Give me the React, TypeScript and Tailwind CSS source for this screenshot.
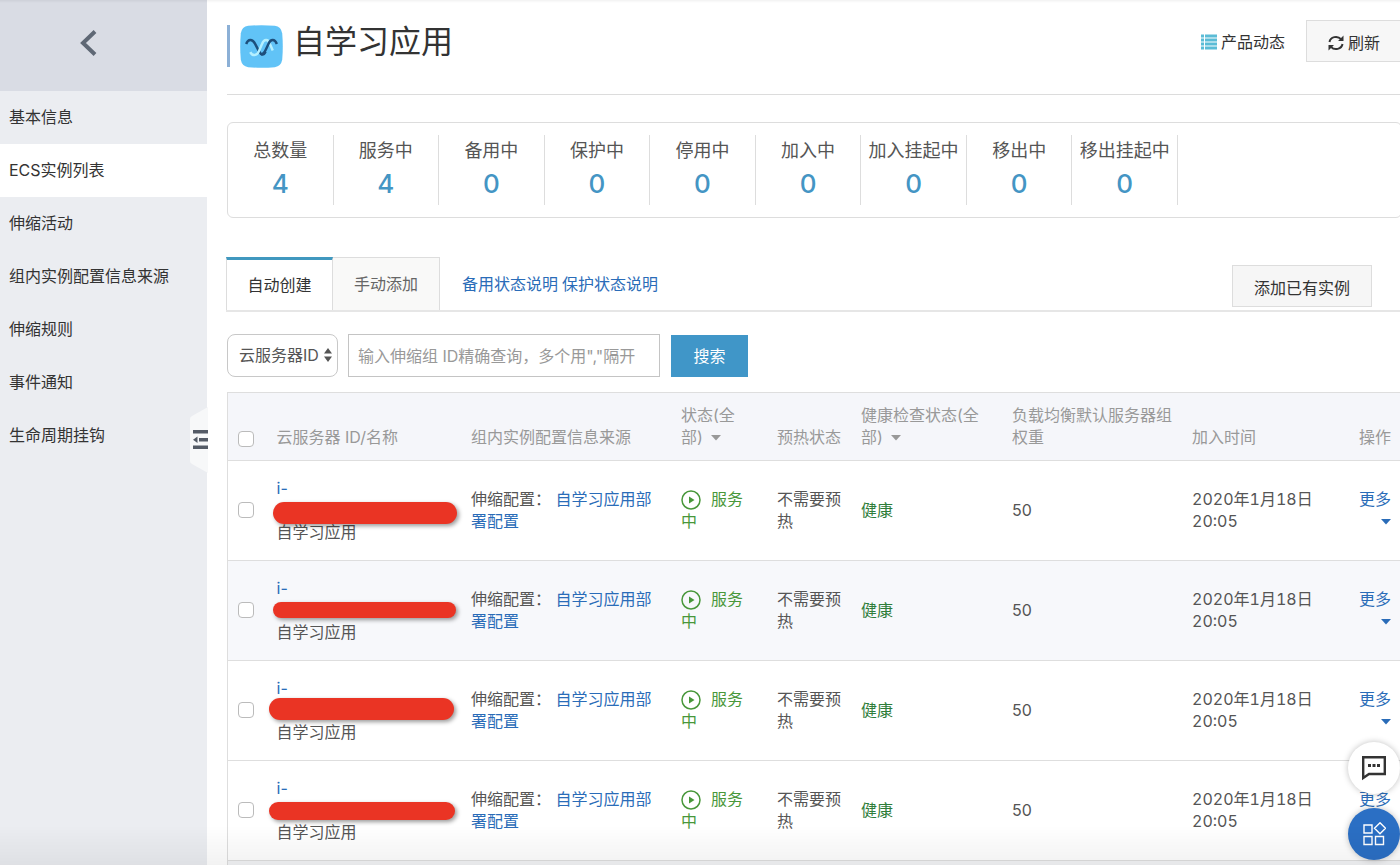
import React, { useState } from 'react';
import { clsx } from 'clsx';

const menuItems = [
  { name: '基本信息' },
  { name: 'ECS实例列表', active: true },
  { name: '伸缩活动' },
  { name: '组内实例配置信息来源' },
  { name: '伸缩规则' },
  { name: '事件通知' },
  { name: '生命周期挂钩' },
];

const stats = [
  { label: '总数量', value: 4 },
  { label: '服务中', value: 4 },
  { label: '备用中', value: 0 },
  { label: '保护中', value: 0 },
  { label: '停用中', value: 0 },
  { label: '加入中', value: 0 },
  { label: '加入挂起中', value: 0 },
  { label: '移出中', value: 0 },
  { label: '移出挂起中', value: 0 },
];

// mask: the red marker stroke that hides the instance id
const rows = [
  { id: 1, mask: '-left-1 top-[25px] w-[184px] h-[22px]' },
  { id: 2, mask: '-left-1 top-[25px] w-[183px] h-4', hovered: true },
  { id: 3, mask: '-left-2 top-[21px] w-[185px] h-[22px]' },
  { id: 4, mask: '-left-2 top-[25px] w-[186px] h-[18px]' },
];

function AppLogo() {
  return (
    <svg viewBox="0 0 42 42" className="w-[43px] h-[43px] shrink-0" fill="none" strokeWidth="2.4" aria-hidden="true">
      <path d="M8 0.8Q21 -0.4 34 0.8Q40.200 1.800 41.200 8Q42.400 21 41.200 34Q40.200 40.200 34 41.200Q21 42.400 8 41.200Q1.800 40.200 0.800 34Q-0.400 21 0.800 8Q1.800 1.800 8 0.800Z" fill="#61c3f7" />
      <path d="M6 18.500C8 13.500 12 13.500 14.500 18L18.500 25.500C20.500 29.500 23 30 25 26" stroke="#1d4f7c" />
      <path d="M10 26.500C12 30.500 16.500 30.500 18.500 25.500L21.500 18.500C23.500 13.500 27.500 13.500 29 18L32 25" stroke="#b5f0ff" />
      <path d="M20.500 28.800C23 28.500 24.200 26.500 25.500 23.500L28 18C30 13.500 34 13.500 36 18.500" stroke="#1d4f7c" />
    </svg>
  );
}

function Caret({ className }: { className?: string }) {
  return (
    <svg viewBox="0 0 10 6" className={clsx('inline-block w-2.5 h-1.5', className)} fill="currentColor" aria-hidden="true">
      <path d="M0 0h10L5 5.500z" />
    </svg>
  );
}

function Sidebar() {
  return (
    <aside className="w-[207px] shrink-0 bg-[#ebedf1] relative">
      <button aria-label="返回" className="w-full h-[91px] bg-[#d9dce4] flex items-center pl-[79px] pb-1.5">
        <svg viewBox="0 0 20 28" className="w-5 h-7" fill="none" stroke="#5f6875" strokeWidth="4" aria-hidden="true">
          <path d="M16 2.500L4 14L16 25.500" />
        </svg>
      </button>
      <nav>
        {menuItems.map((item) => (
          <a
            key={item.name}
            href="#"
            className={clsx(
              'flex items-center h-[53px] pl-[9px] pb-0.5 text-base text-[#333]',
              item.active && 'bg-white'
            )}
          >
            {item.name}
          </a>
        ))}
      </nav>

      {/* Collapse handle on the right edge */}
      <button aria-label="收起菜单" className="absolute -right-px top-[407px] w-[18px] h-[66px]">
        <svg viewBox="0 0 18 66" className="w-full h-full" aria-hidden="true">
          <path d="M18 0L2 9Q0 10 0 12V54Q0 56 2 57L18 66Z" fill="#f7f8f9" />
          <path d="M3 23h15v3.500H3zM9 31h9v3.500H9zM3 38.500h15v3.500H3zM3 32.700L7.500 29.500v6.500z" fill="#545b66" />
        </svg>
      </button>
    </aside>
  );
}

function PageHeader() {
  return (
    <header className="flex items-center justify-between h-[95px] border-b border-[#dcdcdc] pt-5 pb-8">
      <div className="flex items-center pt-2.5">
        <span className="w-[3px] h-[42px] bg-[#8cb0d6]" />
        <span className="ml-2.5">
          <AppLogo />
        </span>
        <h1 className="ml-2.5 pb-2 text-[32px] leading-10 text-[#333]">自学习应用</h1>
      </div>
      <div className="flex items-center text-base text-[#333]">
        <a href="#" className="flex items-center gap-1 mr-[21px] pt-0.5">
          <svg viewBox="0 0 16 16" className="w-4 h-4" fill="#5bbcd6" aria-hidden="true">
            <path d="M0 0.500h3v3H0zM0 4.500h3v3H0zM0 8.500h3v3H0zM0 12.500h3v3H0zM4 0.500h12v3H4zM4 4.500h12v3H4zM4 8.500h12v3H4zM4 12.500h12v3H4z" />
          </svg>
          产品动态
        </a>
        <button className="flex items-center gap-1 h-[42px] px-[21px] pt-[3px] border border-[#ddd] bg-[#f7f7f7]">
          <svg viewBox="0 0 16 16" className="w-4 h-4" fill="none" stroke="#333" strokeWidth="2" aria-hidden="true">
            <path d="M1.500 7A6.500 6 0 0 1 13 4.200M14.500 9A6.500 6 0 0 1 3 11.800" />
            <path d="M15.500 0.500V6H10zM0.500 15.500V10H6z" fill="#333" stroke="none" />
          </svg>
          刷新
        </button>
      </div>
    </header>
  );
}

function StatsPanel() {
  return (
    <section className="mt-[27px] border border-[#ddd] rounded-md py-3">
      <dl className="grid grid-cols-9 max-w-[950px]">
        {stats.map((s) => (
          <div key={s.label} className="border-r border-[#ddd] text-center h-[70px] whitespace-nowrap">
            <dt className="text-lg leading-8 text-[#555]">{s.label}</dt>
            <dd className="text-[26px] leading-[34px] font-medium text-[#4495c4]">{s.value}</dd>
          </div>
        ))}
      </dl>
    </section>
  );
}

function Tabs() {
  const [tab, setTab] = useState('auto');
  const items = [
    { key: 'auto', name: '自动创建' },
    { key: 'manual', name: '手动添加' },
  ];
  return (
    <div className="mt-[39px] -ml-px flex border-b-2 border-[#e6e6e6] h-[55px] text-base">
      <div role="tablist" className="flex">
        {items.map((t) => (
          <button
            key={t.key}
            role="tab"
            aria-selected={tab === t.key}
            onClick={() => setTab(t.key)}
            className={clsx(
              'w-[107px] border-r border-[#ddd] first:border-l',
              tab === t.key
                ? 'bg-white text-[#333] border-t-3 border-t-[#4098bf]'
                : 'bg-[#f9f9f8] text-[#666] border-t'
            )}
          >
            {t.name}
          </button>
        ))}
      </div>
      <div className="flex gap-1 ml-[22px] items-center text-[#2a6cb8]">
        <a href="#">备用状态说明</a>
        <a href="#">保护状态说明</a>
      </div>
      <button className="ml-auto mr-[30px] mt-2 pt-[3px] h-[42px] w-[140px] border border-[#ddd] bg-[#f6f6f6] text-[#333]">
        添加已有实例
      </button>
    </div>
  );
}

function SearchBar() {
  return (
    <form className="flex mt-[22px] text-base" onSubmit={(e) => e.preventDefault()}>
      <div className="relative">
        <select
          aria-label="查询条件"
          className="appearance-none h-[43px] w-[111px] pl-[11px] pb-0.5 border border-[#c8c8c8] rounded-lg bg-white text-[#555]"
        >
          <option>云服务器ID</option>
          <option>云服务器名称</option>
        </select>
        <svg viewBox="0 0 8 14" className="absolute right-1.5 top-[14px] w-2 h-3.5 pointer-events-none" fill="#555" aria-hidden="true">
          <path d="M4 0L8 5.500H0zM4 14L0 8.500H8z" />
        </svg>
      </div>
      <input
        type="text"
        aria-label="查询内容"
        placeholder={'输入伸缩组 ID精确查询，多个用","隔开'}
        className="ml-2.5 h-[43px] w-[312px] px-[9px] border border-[#c4c4c4] placeholder:text-[#999]"
      />
      <button className="ml-[11px] mt-px h-[42px] w-[77px] bg-[#4096c8] text-white">搜索</button>
    </form>
  );
}

function InstanceTable() {
  return (
    <table className="mt-[15px] w-full table-fixed border-collapse text-base leading-[22px] text-[#555] border-l border-t border-[#dedede]">
      <colgroup>
        <col className="w-[39px]" />
        <col />
        <col className="w-[210px]" />
        <col className="w-24" />
        <col className="w-[84px]" />
        <col className="w-[151px]" />
        <col className="w-[180px]" />
        <col className="w-[167px]" />
        <col className="w-[53px]" />
      </colgroup>
      <thead>
        <tr className="h-[68px] bg-[#f5f6fa] text-left text-[#999] align-bottom border-b border-[#dedede] [&>th]:font-normal [&>th]:px-2.5 [&>th]:pb-3">
          <th>
            <input type="checkbox" aria-label="全选" className="block appearance-none w-4 h-4 mb-px border border-[#bbb] rounded-sm bg-white" />
          </th>
          <th>云服务器 ID/名称</th>
          <th>组内实例配置信息来源</th>
          <th>
            状态(全
            <br />
            部) <Caret className="ml-1 mb-0.5" />
          </th>
          <th>预热状态</th>
          <th>
            健康检查状态(全
            <br />
            部) <Caret className="ml-1 mb-0.5" />
          </th>
          <th>负载均衡默认服务器组权重</th>
          <th>加入时间</th>
          <th>操作</th>
        </tr>
      </thead>
      <tbody>
        {rows.map((row) => (
          <tr
            key={row.id}
            className={clsx(
              'h-[100px] border-b border-[#dedede] [&>td]:px-2.5 [&>td]:pb-0.5',
              row.hovered && 'bg-[#f7f8fb]'
            )}
          >
            <td>
              <input type="checkbox" aria-label="选择实例" className="block appearance-none w-4 h-4 border border-[#bbb] rounded-sm bg-white" />
            </td>
            <td>
              <div className="relative">
                <a href="#" className="block mb-[22px] text-[#2a6cb8]">i-</a>
                <span className={clsx('absolute rounded-full bg-[#ea3424] shadow-[2px_2px_4px_rgba(0,0,0,0.4)]', row.mask)} />
                自学习应用
              </div>
            </td>
            <td>
              伸缩配置： <a href="#" className="text-[#2a6cb8]">自学习应用部署配置</a>
            </td>
            <td className="text-[#48973a]">
              <svg viewBox="0 0 20 20" className="inline-block w-5 h-5 mr-2.5 align-[-5px]" fill="none" stroke="currentColor" strokeWidth="1.5" aria-hidden="true">
                <circle cx="10" cy="10" r="9" />
                <path d="M8 6.500L13.500 10L8 13.500z" fill="currentColor" stroke="none" />
              </svg>
              服务中
            </td>
            <td>不需要预热</td>
            <td className="text-[#2f7d3a]">健康</td>
            <td>50</td>
            <td className="tabular-nums">2020年1月18日 20:05</td>
            <td>
              <a href="#" className="block w-8 text-right text-[#2a6cb8]">
                更多
                <Caret />
              </a>
            </td>
          </tr>
        ))}
      </tbody>
    </table>
  );
}

function FloatingButtons() {
  return (
    <div className="fixed right-0 bottom-[5px] flex flex-col gap-3.5">
      <button aria-label="在线咨询" className="w-[52px] h-[52px] rounded-full bg-white flex items-center justify-center shadow-[0_0_6px_rgba(0,0,0,0.25)]">
        <svg viewBox="0 0 26 26" className="w-[26px] h-[26px]" fill="none" stroke="#333" strokeWidth="2.4" aria-hidden="true">
          <path d="M2.200 2.200H23.800V19H8L2.200 23Z" />
          <path d="M7 10.500h3M11.500 10.500h3M16 10.500h3" strokeWidth="3" />
        </svg>
      </button>
      <button aria-label="更多服务" className="w-[52px] h-[52px] rounded-full bg-[#2b6fc4] flex items-center justify-center shadow-[0_0_6px_rgba(0,0,0,0.25)]">
        <svg viewBox="0 0 24 24" className="w-6 h-6" fill="none" stroke="#fff" strokeWidth="1.4" aria-hidden="true">
          <path d="M2 3h8v8h-8zM2 14.500h8v8h-8zM13.500 14.500h8v8h-8zM18 0.800L23.500 6.300L18 11.800L12.500 6.300z" />
        </svg>
      </button>
    </div>
  );
}

export default function App() {
  return (
    <div className="flex min-h-screen bg-white font-[Inter,'Noto_Sans_CJK_SC',sans-serif]">
      <Sidebar />
      <main className="flex-1 min-w-0 pl-5 overflow-hidden flex flex-col">
        <div className="-mr-0.5 flex-1 flex flex-col">
          <PageHeader />
          <StatsPanel />
          <Tabs />
          <SearchBar />
          <InstanceTable />
          <div className="flex-1 bg-[#f3f4f6] border-l border-[#dedede]" />
        </div>
      </main>
      <FloatingButtons />
      {/* Soft shading along the window edges */}
      <div className="fixed inset-x-0 top-0 h-[3px] bg-gradient-to-b from-black/5 to-transparent pointer-events-none" />
      <div className="fixed inset-x-0 bottom-0 h-10 bg-gradient-to-t from-black/5 to-transparent pointer-events-none" />
    </div>
  );
}
